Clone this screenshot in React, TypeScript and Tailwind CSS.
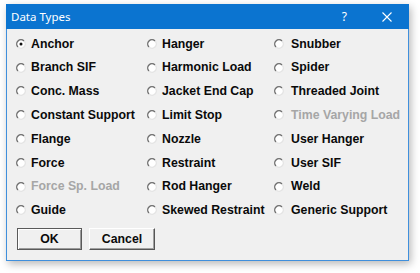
import React from "react"

type Item = { label: string; checked?: boolean; disabled?: boolean }

const columns: Item[][] = [
  [
    { label: "Anchor", checked: true },
    { label: "Branch SIF" },
    { label: "Conc. Mass" },
    { label: "Constant Support" },
    { label: "Flange" },
    { label: "Force" },
    { label: "Force Sp. Load", disabled: true },
    { label: "Guide" },
  ],
  [
    { label: "Hanger" },
    { label: "Harmonic Load" },
    { label: "Jacket End Cap" },
    { label: "Limit Stop" },
    { label: "Nozzle" },
    { label: "Restraint" },
    { label: "Rod Hanger" },
    { label: "Skewed Restraint" },
  ],
  [
    { label: "Snubber" },
    { label: "Spider" },
    { label: "Threaded Joint" },
    { label: "Time Varying Load", disabled: true },
    { label: "User Hanger" },
    { label: "User SIF" },
    { label: "Weld" },
    { label: "Generic Support" },
  ],
]

function Radio({ checked }: { checked?: boolean }) {
  return (
    <svg width="10" height="10" viewBox="0 0 10 10" className="shrink-0">
      <circle cx="5" cy="5" r="4" fill="#ffffff" />
      <path d="M 1.99 8.01 A 4.25 4.25 0 0 1 8.01 1.99" fill="none" stroke="#6f6f6f" strokeWidth="1.4" />
      <path d="M 8.01 1.99 A 4.25 4.25 0 0 1 1.99 8.01" fill="none" stroke="#e4e4e4" strokeWidth="1.4" />
      {checked && <circle cx="5" cy="5" r="1.5" fill="#111111" />}
    </svg>
  )
}

function Option({ item }: { item: Item }) {
  return (
    <div className="flex h-[23.8px] items-center gap-[5px]">
      <Radio checked={item.checked} />
      <span className={`text-[12.3px] font-bold whitespace-nowrap ${item.disabled ? "text-[#a6a6a6]" : "text-[#0a0a0a]"}`}>
        {item.label}
      </span>
    </div>
  )
}

export default function App() {
  return (
    <div className="h-[273px] w-[420px] bg-white pl-[6px] pt-[4px] font-['Liberation_Sans',Arial,sans-serif]">
      <div className="flex h-[257px] w-[403px] flex-col border border-[#3f8fdc] bg-[#f0f0f0] shadow-[2px_3px_8px_rgba(0,0,0,0.28)]">
        {/* Title bar */}
        <div className="-mx-px -mt-px flex h-[25px] items-center bg-[#0b74d0] pl-[5px] text-white">
          <span className="font-['Noto_Sans',sans-serif] text-[11.5px]">Data Types</span>
          <span className="ml-auto mr-[35px] font-['Noto_Sans',sans-serif] text-[12px]">?</span>
          <svg width="10" height="10" viewBox="0 0 10 10" className="mr-[17px]">
            <path d="M0.5 0.5 L9.5 9.5 M9.5 0.5 L0.5 9.5" stroke="#ffffff" strokeWidth="1.1" />
          </svg>
        </div>

        {/* Options */}
        <div className="flex pl-[9px] pt-[3px]">
          <div className="w-[131px]">
            {columns[0].map((it) => (
              <Option key={it.label} item={it} />
            ))}
          </div>
          <div className="w-[127px]">
            {columns[1].map((it) => (
              <Option key={it.label} item={it} />
            ))}
          </div>
          <div className="[&_span]:ml-[2px]">
            {columns[2].map((it) => (
              <Option key={it.label} item={it} />
            ))}
          </div>
        </div>

        {/* Buttons */}
        <div className="mt-[6px] flex gap-[7px] pl-[10px]">
          <button className="h-[22px] w-[65px] border border-[#5a5a5a] bg-[#f0f0f0] text-[12.3px] font-bold text-[#0a0a0a] shadow-[inset_1px_1px_0_#ffffff,inset_-1px_-1px_0_#9a9a9a]">
            OK
          </button>
          <button className="h-[22px] w-[66px] border border-t-white border-l-white border-r-[#555555] border-b-[#555555] bg-[#f0f0f0] text-[12.3px] font-bold text-[#0a0a0a] shadow-[inset_-1px_-1px_0_#a0a0a0]">
            Cancel
          </button>
        </div>
      </div>
    </div>
  )
}
